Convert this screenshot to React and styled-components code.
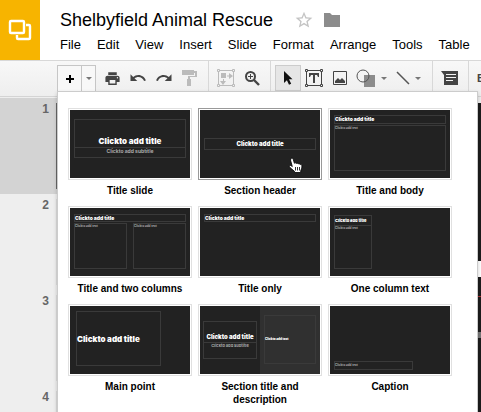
import React from 'react';
import styled, { createGlobalStyle } from 'styled-components';
import { MdPrint, MdUndo, MdRedo, MdStarBorder } from 'react-icons/md';

const menus = [
  'File',
  'Edit',
  'View',
  'Insert',
  'Slide',
  'Format',
  'Arrange',
  'Tools',
  'Table'
];

const TITLE = 'Clickto add title';
const SUBTITLE = 'Clickto add subtitle';
const BODY = 'Clickto add text';

// box: left, top, width, height on the 120x68 slide
const layouts = [
  {
    name: 'Title slide',
    boxes: [
      { box: [4, 9, 112, 29], text: TITLE, size: 8, align: 'center', v: 'end' },
      { box: [4, 37, 112, 11], text: SUBTITLE, size: 5, align: 'center', dim: true }
    ]
  },
  {
    name: 'Section header',
    active: true,
    boxes: [{ box: [4, 28, 112, 12], text: TITLE, size: 6, align: 'center', v: 'center' }]
  },
  {
    name: 'Title and body',
    boxes: [
      { box: [4, 5, 112, 9], text: TITLE, size: 5, v: 'center' },
      { box: [4, 15, 112, 46], text: BODY, size: 3, dim: true }
    ]
  },
  {
    name: 'Title and two columns',
    boxes: [
      { box: [4, 6, 112, 8], text: TITLE, size: 5, v: 'center' },
      { box: [4, 15, 53, 46], text: BODY, size: 3, dim: true },
      { box: [63, 15, 53, 46], text: BODY, size: 3, dim: true }
    ]
  },
  {
    name: 'Title only',
    boxes: [{ box: [4, 6, 112, 8], text: TITLE, size: 5, v: 'center' }]
  },
  {
    name: 'One column text',
    boxes: [
      { box: [4, 7, 38, 11], text: TITLE, size: 4, v: 'end' },
      { box: [4, 17, 38, 44], text: BODY, size: 3, dim: true }
    ]
  },
  {
    name: 'Main point',
    boxes: [{ box: [6, 5, 85, 55], text: TITLE, size: 8, v: 'center' }]
  },
  {
    name: 'Section title and description',
    split: true,
    boxes: [
      { box: [3, 15, 54, 22], text: TITLE, size: 6, align: 'center', v: 'end' },
      { box: [3, 36, 54, 17], text: SUBTITLE, size: 4, align: 'center', dim: true },
      { box: [64, 9, 52, 49], text: BODY, size: 3, v: 'center' }
    ]
  },
  {
    name: 'Caption',
    boxes: [{ box: [4, 55, 79, 9], text: BODY, size: 3, v: 'center', dim: true }]
  }
];

const LogoIcon = () => (
  <svg width="24" height="22" viewBox="0 0 24 22" fill="none" stroke="#fff" strokeWidth="2.400">
    <rect x="2" y="2" width="14" height="12" rx="1" />
    <path d="M18 6h3a1 1 0 0 1 1 1v12a1 1 0 0 1-1 1H10a1 1 0 0 1-1-1v-3" />
  </svg>
);

const FolderIcon = () => (
  <svg width="16" height="14" viewBox="0 0 16 14" fill="#8c8c8c">
    <path d="M0 0h6l2 2h8v12H0z" />
  </svg>
);

const PlusIcon = () => (
  <svg width="8" height="8" viewBox="0 0 8 8" fill="#000">
    <path d="M3 0h2v3h3v2H5v3H3V5H0V3h3z" />
  </svg>
);

const Caret = () => (
  <svg width="6" height="3" viewBox="0 0 6 3" fill="#777">
    <path d="M0 0h6L3 3z" />
  </svg>
);

const PaintIcon = () => (
  <svg width="16" height="18" viewBox="0 0 16 18" fill="#bbb">
    <path d="M0 1h12v5H0z" />
    <path d="M12 2h3v6H8v3H6V7h7V4h-1z" />
    <path d="M5 10h4v7H5z" />
  </svg>
);

const FitIcon = () => (
  <svg width="20" height="20" viewBox="0 0 20 20" fill="none" stroke="#bbb">
    <path d="M3 2.500h13M3 17.500h13M2.500 3v14M17.500 3v14" />
    <path d="M1.500 1.500h2v2h-2zM16.500 1.500h2v2h-2zM1.500 16.500h2v2h-2zM16.500 16.500h2v2h-2z" fill="#f4f4f4" />
    <path d="M5 5h5v5H5zM13 5l4 3-4 3zM4 13h6l-3 4z" fill="#bbb" stroke="none" />
    <path d="M11 8h3M7.500 11v3" />
  </svg>
);

const ZoomIcon = () => (
  <svg width="15" height="15" viewBox="0 0 15 15" fill="none" stroke="#444">
    <circle cx="5.500" cy="5.500" r="4.500" strokeWidth="2" />
    <path d="M9 9l5 5" strokeWidth="2.400" />
    <path d="M3 5.500h5M5.500 3v5" />
  </svg>
);

const PointerIcon = () => (
  <svg width="12" height="16" viewBox="0 0 12 16" fill="#111">
    <path d="M2 1l8.500 8.300H7l2.200 4.500-2.200 1-2.100-4.600L2 13z" />
  </svg>
);

const TextBoxIcon = () => (
  <svg width="18" height="18" viewBox="0 0 18 18" fill="none" stroke="#444">
    <path d="M3 1.500h12M3 16.500h12M1.500 3v12M16.500 3v12" />
    <path d="M.5.5h2v2h-2zM15.500.5h2v2h-2zM.5 15.500h2v2h-2zM15.500 15.500h2v2h-2z" fill="#f4f4f4" />
    <path d="M4 4h10v4h-1l-1-2h-2v8H8V6H6L5 8H4z" fill="#444" stroke="none" />
  </svg>
);

const ImageIcon = () => (
  <svg width="16" height="14" viewBox="0 0 16 14" fill="none" stroke="#444">
    <path d="M1.500.5h13v13h-13z" />
    <path d="M3 12v-2l3-3 2 2 2-2 3 3v2z" fill="#444" stroke="none" />
  </svg>
);

const ShapeIcon = () => (
  <svg width="20" height="18" viewBox="0 0 20 18">
    <path d="M8 6h11v12H8z" fill="#8c8c8c" />
    <circle cx="7" cy="7" r="6" fill="none" stroke="#555" />
  </svg>
);

const LineIcon = () => (
  <svg width="14" height="14" viewBox="0 0 14 14">
    <path d="M1 1l12 12" stroke="#555" strokeWidth="1.500" />
  </svg>
);

const CommentIcon = () => (
  <svg width="18" height="14" viewBox="0 0 18 14">
    <path d="M0 0h17v14H3V4z" fill="#444" />
    <path d="M5 3.500h10M5 6.500h10M5 9.500h7" stroke="#f4f4f4" />
  </svg>
);

const HandCursor = () => (
  <svg width="15" height="17" viewBox="0 0 15 17">
    <path
      d="M3 1.500c1-.8 2 0 2.200.8l1.200 4c.6-.7 1.700-.5 2 .2.700-.5 1.600-.3 1.900.4.800-.4 1.700 0 1.900.7.800-.3 1.600.1 1.700 1 .2 2.400-.6 3.300-1.200 5.400v1.500H6.500v-1.200C5 13.200 3 11.500 1.400 9.800.8 8.900 2 8 3 8.600l1.300 1L2.500 3z"
      fill="#fff"
      stroke="#000"
      strokeWidth=".8"
    />
    <path d="M7.500 10v3.500M9.500 10v3.500M11.500 10v3.500" stroke="#000" strokeWidth=".8" />
  </svg>
);

const LayoutOption = ({ layout }) => (
  <Option type="button">
    <Frame $active={layout.active}>
      <Slide $split={layout.split}>
        {layout.boxes.map((item, i) => (
          <Placeholder
            key={i}
            $box={item.box}
            $size={item.size}
            $align={item.align}
            $v={item.v}
            $dim={item.dim}
          >
            {item.text}
          </Placeholder>
        ))}
        {layout.active ? (
          <Cursor>
            <HandCursor />
          </Cursor>
        ) : null}
      </Slide>
    </Frame>
    <OptionName>{layout.name}</OptionName>
  </Option>
);

const App = () => (
  <Page>
    <GlobalStyle />
    <Header>
      <Logo href="#" aria-label="Slides home">
        <LogoIcon />
      </Logo>
      <HeaderBody>
        <TitleRow>
          <DocTitle>Shelbyfield Animal Rescue</DocTitle>
          <IconButton aria-label="Star">
            <MdStarBorder size={20} color="#c4c4c4" />
          </IconButton>
          <IconButton aria-label="Folder">
            <FolderIcon />
          </IconButton>
        </TitleRow>
        <MenuBar>
          {menus.map(name => (
            <MenuItem key={name}>{name}</MenuItem>
          ))}
        </MenuBar>
      </HeaderBody>
    </Header>

    <Toolbar>
      <SplitButton>
        <NewSlide aria-label="New slide">
          <PlusIcon />
        </NewSlide>
        <NewSlideArrow aria-label="New slide with layout">
          <Caret />
        </NewSlideArrow>
        <LayoutMenu>
          {layouts.map(layout => (
            <LayoutOption key={layout.name} layout={layout} />
          ))}
        </LayoutMenu>
      </SplitButton>
      <Tool aria-label="Print">
        <MdPrint size={17} />
      </Tool>
      <Tool aria-label="Undo">
        <MdUndo size={18} />
      </Tool>
      <Tool aria-label="Redo">
        <MdRedo size={18} />
      </Tool>
      <Tool aria-label="Paint format">
        <PaintIcon />
      </Tool>
      <Separator />
      <Tool aria-label="Zoom to fit">
        <FitIcon />
      </Tool>
      <Tool aria-label="Zoom">
        <ZoomIcon />
      </Tool>
      <Separator />
      <Tool aria-label="Select" $pressed>
        <PointerIcon />
      </Tool>
      <Tool aria-label="Text box">
        <TextBoxIcon />
      </Tool>
      <Tool aria-label="Image">
        <ImageIcon />
      </Tool>
      <Tool aria-label="Shape" $wide>
        <ShapeIcon />
        <Caret />
      </Tool>
      <Tool aria-label="Line" $wide>
        <LineIcon />
        <Caret />
      </Tool>
      <Separator />
      <Tool aria-label="Comment">
        <CommentIcon />
      </Tool>
      <Separator />
      <TextTool>Background...</TextTool>
    </Toolbar>

    <Workspace>
      <Filmstrip>
        {[1, 2, 3, 4].map(n => (
          <FilmRow key={n} $selected={n === 1}>
            <FilmNumber>{n}</FilmNumber>
            <FilmThumb $selected={n === 1} />
          </FilmRow>
        ))}
      </Filmstrip>
      <Canvas>
        <CanvasSlide>
          <svg width="100%" height="300">
            <rect y="158" width="400" height="16" fill="#fff" />
            <rect y="193" width="400" height="1" fill="#a33" />
            <rect y="229" width="400" height="6" fill="#777" />
          </svg>
        </CanvasSlide>
      </Canvas>
    </Workspace>
  </Page>
);

export default App;

const GlobalStyle = createGlobalStyle`
  * {
    box-sizing: border-box;
  }

  body {
    margin: 0;
    overflow: hidden;
    font-family: 'Liberation Sans', Arial, sans-serif;
    color: #000;
  }

  button {
    margin: 0;
    padding: 0;
    border: 0;
    background: none;
    font: inherit;
    color: inherit;
  }

  svg {
    display: block;
    flex: none;
  }
`;

const Page = styled.div`
  display: flex;
  flex-direction: column;
  height: 100vh;
  overflow: hidden;
  background: #eee;
`;

const Header = styled.header`
  display: flex;
  flex: none;
  background: #fff;
`;

const Logo = styled.a`
  display: flex;
  align-items: center;
  justify-content: center;
  width: 40px;
  height: 60px;
  background: #f7b400;
`;

const HeaderBody = styled.div`
  flex: 1;
  min-width: 0;
  padding: 8px 0 0 20px;
  overflow: hidden;
`;

const TitleRow = styled.div`
  display: flex;
  align-items: center;
  height: 24px;
`;

const DocTitle = styled.h1`
  margin: 0 21px 0 0;
  font-size: 18px;
  font-weight: normal;
  line-height: 24px;
  white-space: nowrap;
`;

const IconButton = styled.button`
  display: flex;
  margin-right: 10px;
`;

const MenuBar = styled.nav`
  display: flex;
  gap: 16px;
  margin-top: 5px;
`;

const MenuItem = styled.button`
  font-size: 13px;
  line-height: 16px;
`;

const Toolbar = styled.div`
  display: flex;
  flex: none;
  padding: 4px 0 5px 57px;
  border-top: 1px solid #d8d8d8;
  border-bottom: 1px solid #d4d4d4;
  background: linear-gradient(#f8f8f8, #eee);
  color: #444;
`;

const SplitButton = styled.div`
  position: relative;
  display: flex;
  flex: none;
  margin-right: 3px;
  border: 1px solid #c6c6c6;
  border-bottom: 0;
  background: #f8f8f8;
`;

const NewSlide = styled.button`
  display: flex;
  align-items: center;
  justify-content: center;
  width: 23px;
`;

const NewSlideArrow = styled(NewSlide)`
  width: 14px;
  border-left: 1px solid #c6c6c6;
`;

const Tool = styled.button`
  display: flex;
  flex: none;
  align-items: center;
  justify-content: center;
  gap: 5px;
  width: ${props => (props.$wide ? '37px' : '26px')};
  height: 26px;
  border: 1px solid ${props => (props.$pressed ? '#ccc' : 'transparent')};
  background: ${props => (props.$pressed ? '#e6e6e6' : 'none')};
`;

const TextTool = styled.button`
  flex: none;
  padding: 0 4px;
  font-size: 11px;
  font-weight: bold;
`;

const Separator = styled.div`
  flex: none;
  width: 1px;
  margin: -4px 4px -5px 5px;
  background: #d8d8d8;
`;

const LayoutMenu = styled.div`
  position: absolute;
  z-index: 10;
  top: 100%;
  left: -1px;
  display: grid;
  grid-template-columns: repeat(3, 124px);
  gap: 9px 6px;
  padding: 16px 25px 24px 10px;
  border: 1px solid #ccc;
  background: #fff;
  box-shadow: 0 2px 4px rgba(0, 0, 0, 0.2);
  color: #000;
`;

const Option = styled.button`
  display: flex;
  flex-direction: column;
  align-items: center;
  gap: 4px;
`;

const Frame = styled.div`
  padding: 1px;
  border: 1px solid ${props => (props.$active ? '#999' : '#e0e0e0')};
`;

const Slide = styled.div`
  position: relative;
  width: 120px;
  height: 68px;
  background: ${props =>
    props.$split ? 'linear-gradient(90deg, #222 50%, #303030 50%)' : '#222'};
`;

const Placeholder = styled.div`
  position: absolute;
  left: ${props => props.$box[0]}px;
  top: ${props => props.$box[1]}px;
  width: ${props => props.$box[2]}px;
  height: ${props => props.$box[3]}px;
  display: flex;
  align-items: ${props => props.$v || 'flex-start'};
  justify-content: ${props => props.$align || 'flex-start'};
  padding: ${props => (props.$v === 'end' ? '0 0 2px' : props.$v ? '0' : '1px 0 0')};
  border: 1px solid #3a3a3a;
  font-family: Inter, 'Liberation Sans', sans-serif;
  font-size: ${props => props.$size}px;
  font-weight: ${props => (props.$dim ? 700 : 900)};
  line-height: 1;
  white-space: nowrap;
  color: ${props => (props.$dim ? '#aaa' : '#fff')};
`;

const Cursor = styled.div`
  position: absolute;
  left: 88px;
  top: 47px;
`;

const OptionName = styled.span`
  font-size: 10px;
  font-weight: bold;
  line-height: 13px;
`;

const Workspace = styled.div`
  display: flex;
  flex: 1;
  min-height: 0;
  padding-top: 1px;
`;

const Filmstrip = styled.ol`
  flex: none;
  width: 200px;
  margin: 0;
  padding: 0;
  list-style: none;
`;

const FilmRow = styled.li`
  display: flex;
  height: 96px;
  padding: 5px 0;
  background: ${props => (props.$selected ? '#d3d3d3' : '#eee')};
`;

const FilmNumber = styled.span`
  width: 56px;
  padding-right: 7px;
  font-size: 12px;
  font-weight: bold;
  line-height: 12px;
  text-align: right;
  color: #666;
`;

const FilmThumb = styled.div`
  flex: 1;
  border: 1px solid ${props => (props.$selected ? '#666' : '#ddd')};
  background: #222;
`;

const Canvas = styled.main`
  flex: 1;
  padding: 5px 0 0 20px;
`;

const CanvasSlide = styled.div`
  height: 100%;
  background: #1c1c1c;
`;
